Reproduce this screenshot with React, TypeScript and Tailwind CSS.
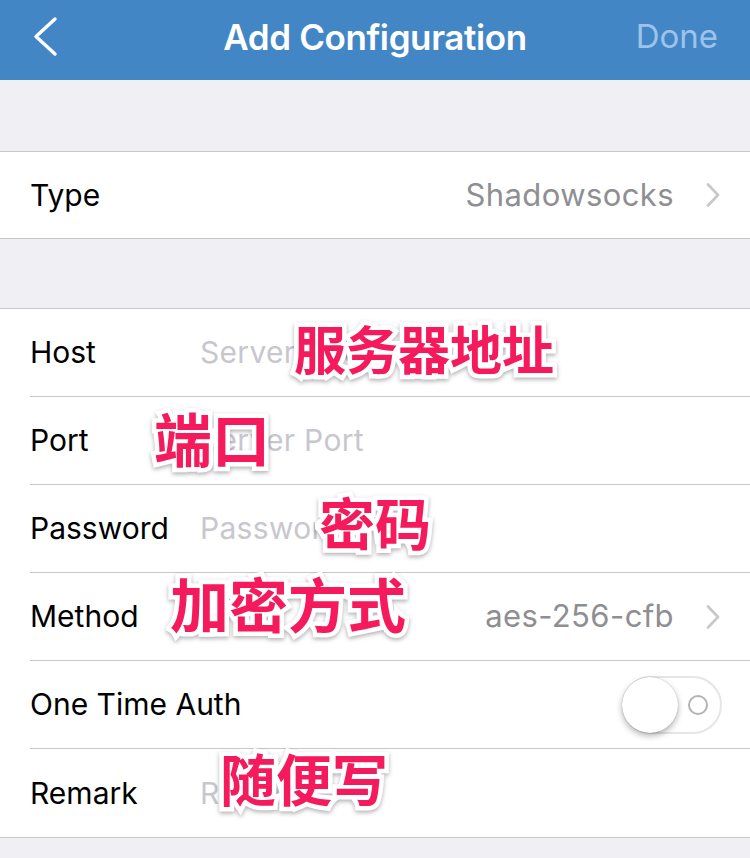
import { ReactNode } from "react";

// Annotation overlay drawn over the screenshot (pink with white outline)
function Note({ text, className }: { text: string; className: string }) {
    return (
        <span
            className={`absolute leading-none whitespace-nowrap font-bold text-[#F41A5C] font-['Noto_Sans_CJK_SC',sans-serif] [-webkit-text-stroke:9px_white] [paint-order:stroke_fill] drop-shadow-[0_2px_2px_rgba(0,0,0,0.3)] ${className}`}
        >
            {text}
        </span>
    );
}

function Chevron() {
    return (
        <svg width="14" height="24" viewBox="0 0 14 24" className="ml-8 shrink-0">
            <path d="M2 1.5 L12 12 L2 22.5" fill="none" stroke="#C7C7CC" strokeWidth="2.6" strokeLinecap="round" strokeLinejoin="round" />
        </svg>
    );
}

function Row({ label, children, last }: { label: string; children?: ReactNode; last?: boolean }) {
    return (
        <div className="pl-[30px]">
            <div className={`h-[88px] flex items-center pr-[30px] ${last ? "" : "border-b border-[#C8C7CC]"}`}>
                <span className="min-w-[170px] whitespace-nowrap shrink-0 text-[30px] text-black">{label}</span>
                <div className="flex-1 flex items-center min-w-0">{children}</div>
            </div>
        </div>
    );
}

function Placeholder({ text }: { text: string }) {
    return <span className="text-[30px] tracking-[0.3px] text-[#C7C7CD] whitespace-nowrap">{text}</span>;
}

function Value({ text }: { text: string }) {
    return (
        <div className="flex-1 flex items-center justify-end">
            <span className="text-[31px] tracking-[0.4px] text-[#8E8E93]">{text}</span>
            <Chevron />
        </div>
    );
}

function Toggle() {
    return (
        <div className="ml-auto mr-[-2px] relative w-[100px] h-[58px] rounded-full border-2 border-[#E5E5EA] bg-white flex items-center">
            <div className="w-[56px] h-[56px] rounded-full bg-white shadow-[0_3px_6px_rgba(0,0,0,0.3),0_0_1px_rgba(0,0,0,0.3)] -ml-[2px]" />
            <div className="ml-[10px] w-[20px] h-[20px] rounded-full border-2 border-[#B3B3B3]" />
        </div>
    );
}

export default function App() {
    return (
        <div className="relative w-[750px] h-[858px] overflow-hidden bg-[#EFEFF4] font-['Inter','Liberation_Sans',sans-serif]">
            {/* Nav bar */}
            <div className="h-20 bg-[#4386C6] grid grid-cols-[1fr_auto_1fr] items-center px-[30px] pb-[6px]">
                <svg width="30" height="44" viewBox="0 0 30 44">
                    <path d="M25 4 L6 21.5 L25 39" fill="none" stroke="white" strokeWidth="3.4" strokeLinecap="round" strokeLinejoin="round" />
                </svg>
                <span className="text-white text-[35px] font-semibold tracking-[-0.4px]">Add Configuration</span>
                <span className="justify-self-end text-[33px] text-[#9DC3EA] pr-[2px]">Done</span>
            </div>

            <div className="h-[71px]" />

            <div className="bg-white border-y border-[#C8C7CC]">
                <div className="h-[86px] flex items-center pl-[30px] pr-[30px]">
                    <span className="text-[30px] text-black">Type</span>
                    <Value text="Shadowsocks" />
                </div>
            </div>

            <div className="h-[69px]" />

            <div className="bg-white border-y border-[#C8C7CC]">
                <Row label="Host"><Placeholder text="Server Address" /></Row>
                <Row label="Port"><Placeholder text="Server Port" /></Row>
                <Row label="Password"><Placeholder text="Password" /></Row>
                <Row label="Method"><Value text="aes-256-cfb" /></Row>
                <Row label="One Time Auth"><Toggle /></Row>
                <Row label="Remark" last><Placeholder text="Remark" /></Row>
            </div>

            {/* Annotations */}
            <Note text="服务器地址" className="left-[294px] top-[322px] text-[52px]" />
            <Note text="端口" className="left-[154px] top-[408px] text-[58px]" />
            <Note text="密码" className="left-[319px] top-[493px] text-[56px]" />
            <Note text="加密方式" className="left-[170px] top-[573px] text-[59px]" />
            <Note text="随便写" className="left-[220px] top-[749px] text-[56px]" />
        </div>
    );
}
